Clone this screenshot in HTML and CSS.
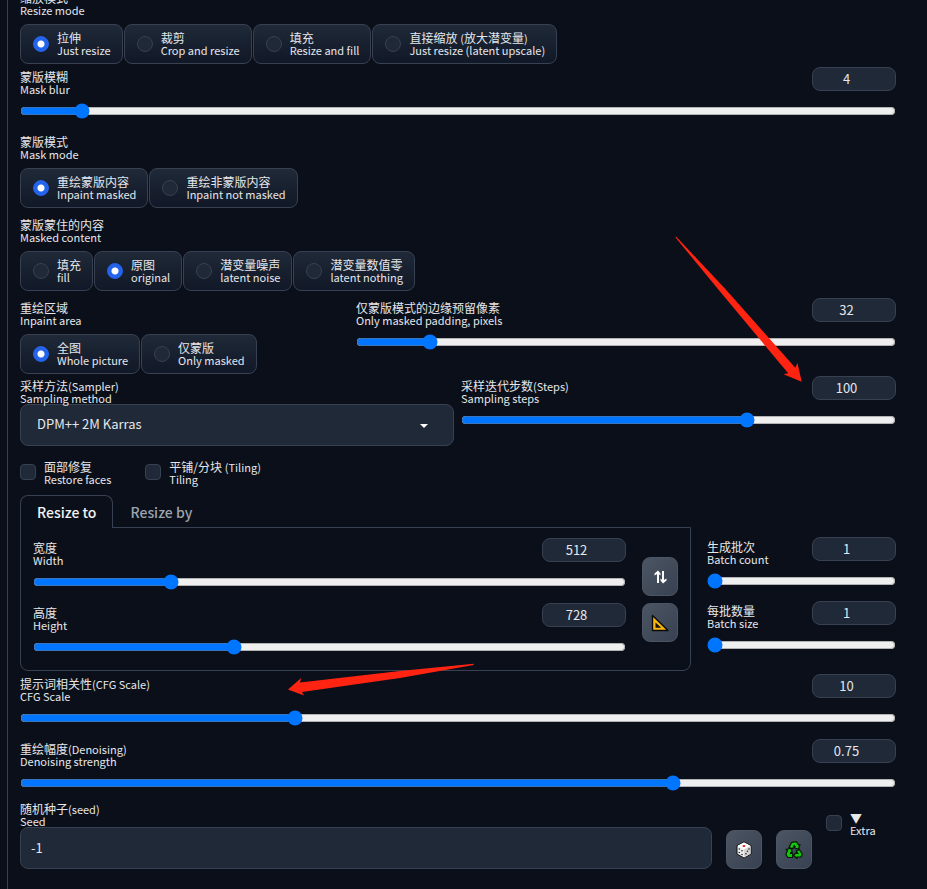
FILE: index.html
```html
<!DOCTYPE html>
<html lang="zh-CN">
<head>
<meta charset="utf-8">
<meta name="viewport" content="width=device-width, initial-scale=1">
<title>img2img</title>
<link rel="stylesheet" href="styles.css">
</head>
<body>
<main class="panel">
  <fieldset class="choice">
    <legend class="bi"><span>缩放模式</span><span>Resize mode</span></legend>
    <div class="options">
      <label class="option"><input type="radio" name="resize" checked><span class="bi"><span>拉伸</span><span>Just resize</span></span></label>
      <label class="option"><input type="radio" name="resize"><span class="bi"><span>裁剪</span><span>Crop and resize</span></span></label>
      <label class="option"><input type="radio" name="resize"><span class="bi"><span>填充</span><span>Resize and fill</span></span></label>
      <label class="option"><input type="radio" name="resize"><span class="bi"><span>直接缩放 <small>(</small>放大潜变量<small>)</small></span><span>Just resize (latent upscale)</span></span></label>
    </div>
  </fieldset>

  <div class="slider tight">
    <div class="slider-head">
      <label class="bi" for="blur"><span>蒙版模糊</span><span>Mask blur</span></label>
      <input class="num" type="number" value="4" aria-label="Mask blur value">
    </div>
    <input id="blur" type="range" min="0" max="64" value="4">
  </div>

  <fieldset class="choice">
    <legend class="bi"><span>蒙版模式</span><span>Mask mode</span></legend>
    <div class="options">
      <label class="option"><input type="radio" name="mask" checked><span class="bi"><span>重绘蒙版内容</span><span>Inpaint masked</span></span></label>
      <label class="option"><input type="radio" name="mask"><span class="bi"><span>重绘非蒙版内容</span><span>Inpaint not masked</span></span></label>
    </div>
  </fieldset>

  <fieldset class="choice">
    <legend class="bi"><span>蒙版蒙住的内容</span><span>Masked content</span></legend>
    <div class="options">
      <label class="option"><input type="radio" name="content"><span class="bi"><span>填充</span><span>fill</span></span></label>
      <label class="option"><input type="radio" name="content" checked><span class="bi"><span>原图</span><span>original</span></span></label>
      <label class="option"><input type="radio" name="content"><span class="bi"><span>潜变量噪声</span><span>latent noise</span></span></label>
      <label class="option"><input type="radio" name="content"><span class="bi"><span>潜变量数值零</span><span>latent nothing</span></span></label>
    </div>
  </fieldset>

  <div class="area-row">
    <fieldset class="choice">
      <legend class="bi"><span>重绘区域</span><span>Inpaint area</span></legend>
      <div class="options">
        <label class="option"><input type="radio" name="area" checked><span class="bi"><span>全图</span><span>Whole picture</span></span></label>
        <label class="option"><input type="radio" name="area"><span class="bi"><span>仅蒙版</span><span>Only masked</span></span></label>
      </div>
    </fieldset>
    <div class="slider">
      <div class="slider-head">
        <label class="bi" for="padding"><span>仅蒙版模式的边缘预留像素</span><span>Only masked padding, pixels</span></label>
        <input class="num" type="number" value="32" aria-label="Only masked padding value">
      </div>
      <input id="padding" type="range" min="0" max="256" value="32">
    </div>
  </div>

  <div class="sampler-row snug">
    <div class="field">
      <label class="bi" for="sampler"><span>采样方法<small>(Sampler)</small></span><span>Sampling method</span></label>
      <div class="select">
        <select id="sampler"><option>DPM++ 2M Karras</option></select>
        <svg class="caret" viewBox="0 0 8 4" aria-hidden="true"><path d="M0 0H8L4 4Z"/></svg>
      </div>
    </div>
    <div class="slider">
      <div class="slider-head">
        <label class="bi" for="steps"><span>采样迭代步数<small>(Steps)</small></span><span>Sampling steps</span></label>
        <input class="num" type="number" value="100" aria-label="Sampling steps value">
      </div>
      <input id="steps" type="range" min="1" max="150" value="100">
    </div>
  </div>

  <div class="checks">
    <label class="check"><input type="checkbox"><span class="bi"><span>面部修复</span><span>Restore faces</span></span></label>
    <label class="check"><input type="checkbox"><span class="bi"><span>平铺/分块 <small>(Tiling)</small></span><span>Tiling</span></span></label>
  </div>

  <div class="size-row">
    <section class="tabs">
      <div class="tab-bar" role="tablist">
        <button class="tab active" type="button" role="tab" aria-selected="true">Resize to</button>
        <button class="tab" type="button" role="tab" aria-selected="false">Resize by</button>
      </div>
      <div class="tab-body">
        <div class="stack">
          <div class="slider">
            <div class="slider-head">
              <label class="bi" for="width"><span>宽度</span><span>Width</span></label>
              <input class="num" type="number" value="512" aria-label="Width value">
            </div>
            <input id="width" type="range" min="64" max="2048" step="8" value="512">
          </div>
          <div class="slider">
            <div class="slider-head">
              <label class="bi" for="height"><span>高度</span><span>Height</span></label>
              <input class="num" type="number" value="728" aria-label="Height value">
            </div>
            <input id="height" type="range" min="64" max="2048" step="8" value="728">
          </div>
        </div>
        <div class="tools">
          <button class="tool" type="button" aria-label="Swap width and height">
            <svg viewBox="0 0 18 18" width="18" height="18"><path d="M7 15V5M12 3V13" fill="none" stroke="#fff" stroke-width="2"/><path d="M7 2.500 9.500 5.500V7.500L7 5.500 3.500 7.500V5.500ZM12 15.500 15.500 12.500V10.500L12 12.500 9.500 10.500V12.500Z" fill="#fff"/></svg>
          </button>
          <button class="tool" type="button" aria-label="Detect size">
            <svg viewBox="0 0 18 18" width="18" height="18"><path d="M1.500 1.500V16.500H17Z" fill="#fbb50c" stroke="#0b0b0b" stroke-width="1.400" stroke-linejoin="round"/><path d="M4.500 8.500 10.300 13.800H4.500Z" fill="#111"/></svg>
          </button>
        </div>
      </div>
    </section>
    <div class="batch stack">
      <div class="slider">
        <div class="slider-head">
          <label class="bi" for="count"><span>生成批次</span><span>Batch count</span></label>
          <input class="num" type="number" value="1" aria-label="Batch count value">
        </div>
        <input id="count" type="range" min="1" max="100" value="1">
      </div>
      <div class="slider">
        <div class="slider-head">
          <label class="bi" for="batch"><span>每批数量</span><span>Batch size</span></label>
          <input class="num" type="number" value="1" aria-label="Batch size value">
        </div>
        <input id="batch" type="range" min="1" max="8" value="1">
      </div>
    </div>
  </div>

  <div class="slider tight">
    <div class="slider-head">
      <label class="bi" for="cfg"><span>提示词相关性<small>(CFG Scale)</small></span><span>CFG Scale</span></label>
      <input class="num" type="number" value="10" aria-label="CFG Scale value">
    </div>
    <input id="cfg" type="range" min="1" max="30" step="0.5" value="10">
  </div>

  <div class="slider">
    <div class="slider-head">
      <label class="bi" for="denoise"><span>重绘幅度<small>(Denoising)</small></span><span>Denoising strength</span></label>
      <input class="num" type="number" step="0.01" value="0.75" aria-label="Denoising strength value">
    </div>
    <input id="denoise" type="range" min="0" max="1" step="0.01" value="0.75">
  </div>

  <div class="seed-row snug">
    <div class="field seed">
      <label class="bi" for="seed"><span>随机种子<small>(seed)</small></span><span>Seed</span></label>
      <input id="seed" class="text" type="number" value="-1">
    </div>
    <button class="tool" type="button" aria-label="Random seed">
      <svg viewBox="0 0 18 18" width="18" height="18"><path d="M9 1 16 4.500V13L9 17 2 13V4.500Z" fill="#eee" stroke="#111" stroke-linejoin="round"/><path d="M9 8.500 15.600 4.800V12.800L9 16.500Z" fill="#d4d4d4"/><path d="M9 1.600 15.200 4.700 9 8.300 2.800 4.700Z" fill="#fff"/><ellipse cx="9" cy="4.900" rx="1.500" ry="1" fill="#d22"/><g fill="#222"><circle cx="4.300" cy="8" r=".8"/><circle cx="7" cy="9.800" r=".8"/><circle cx="4.300" cy="11.500" r=".8"/><circle cx="7" cy="13.500" r=".8"/><circle cx="11" cy="12.800" r=".8"/><circle cx="14" cy="8" r=".8"/><circle cx="12.500" cy="10.300" r=".8"/></g></svg>
    </button>
    <button class="tool" type="button" aria-label="Reuse seed">
      <svg viewBox="0 0 18 18" width="18" height="18"><g stroke="#041604" stroke-width="1.200" stroke-linejoin="round" fill="#16c60c"><path d="M4 6.500 6.500 1.500 9 .8H11.500L13.500 4 15 3.500 13.500 8 9 7 10.300 6 9.200 4.500 7.500 8Z"/><path d="M14.200 8.200 17.200 13 16 16H12V17.500L8.500 14.300 12 11V12.500H13L11.200 10Z"/><path d="M1 8.500 6 7.200 7.200 12 5.700 11.500 5.500 12.500H7.700V16.500H3L.8 13.500 2.500 9.500Z"/></g></svg>
    </button>
    <label class="check extra"><input type="checkbox"><span class="bi"><span>▼</span><span>Extra</span></span></label>
  </div>
</main>

<svg class="arrows" viewBox="0 0 927 889" width="927" height="889" aria-hidden="true">
  <path d="M676 236.500 724 287.500 795.300 367.800 797.400 363 801.700 381.700 783.500 374.300 788.200 373.300 720 291.500 675.500 237.500Z"/>
  <path d="M473.700 663.800 400 671 300 682.500 301.200 678 288 689.500 304 695.500 302 692 400 678 473.700 665Z"/>
</svg>
</body>
</html>
```
FILE: styles.css
```css
* { box-sizing: border-box; }

html {
  height: 100%;
  overflow: hidden;
  background: #0b0f19;
}

body {
  margin: 0;
  padding-left: 7px;
  min-height: 100%;
  font: 400 12px/12px "Noto Sans CJK SC", sans-serif;
  color: #e5e7eb;
}

input, select, button {
  font: inherit;
  color: inherit;
  margin: 0;
}

.panel {
  display: flex;
  flex-direction: column;
  gap: 7px;
  margin-top: -12px;
  min-height: 920px;
  padding: 0 31px 0 12px;
  border-left: 1px solid #374151;
}

.tight { margin-top: -4px; }
.snug { margin-top: -5px; }

/* Two-line label: Chinese above English */
.bi {
  display: flex;
  flex-direction: column;
  position: relative;
  z-index: 1;
  padding: 0;
  white-space: nowrap;
}

.bi > span { display: block; height: 12px; }
.bi > span:last-child, .bi small { font-size: 11px; }

/* Radio groups */
.choice {
  margin: 0;
  padding: 0;
  border: 0;
  min-width: 0;
}

.choice legend { padding-top: 4px; }

.options {
  display: flex;
  flex-wrap: wrap;
  gap: 1px;
  padding-top: 8px;
}

.option {
  display: flex;
  align-items: center;
  gap: 8px;
  height: 40px;
  padding: 0 11px 0 12px;
  border: 1px solid #374151;
  border-radius: 8px;
  background: linear-gradient(#1f2937, #111827);
}

input[type="radio"], input[type="checkbox"] {
  appearance: none;
  flex: none;
  width: 16px;
  height: 16px;
  border: 1px solid #374151;
  border-radius: 4px;
  background: #1f2937;
}

input[type="radio"] { border-radius: 50%; }

input[type="radio"]:checked {
  border-color: #2563eb;
  background: radial-gradient(circle, #fff 0 2px, #fff 3px, #2563eb 4px);
}

/* Sliders */
.slider {
  display: flex;
  flex-direction: column;
  gap: 12px;
  padding-bottom: 6px;
  min-width: 0;
}

.slider-head {
  display: flex;
  justify-content: space-between;
  height: 24px;
}

.slider-head .bi { padding-top: 4px; }

.num {
  width: 84px;
  height: 24px;
  padding: 0 8px 1px;
  border: 1px solid #374151;
  border-radius: 8px;
  background: #1f2937;
  font-size: 13px;
  text-align: center;
}

input[type="range"] {
  display: block;
  width: 100%;
  height: 16px;
}

/* Rows */
.area-row {
  display: grid;
  grid-template-columns: 320fr 540fr;
  gap: 16px;
}

.sampler-row {
  display: grid;
  grid-template-columns: 434fr 435fr;
  gap: 7px;
}

.field { padding-top: 4px; }

.select { position: relative; }

.select select, .text {
  display: block;
  appearance: none;
  width: 100%;
  height: 42px;
  padding: 0 16px 2px;
  border: 1px solid #374151;
  border-radius: 8px;
  background: #1f2937;
  font-size: 13px;
}

.text { padding: 0 10px 2px; }

.caret {
  position: absolute;
  right: 26px;
  top: 20px;
  width: 8px;
  height: 4px;
  fill: #fff;
}

.checks {
  display: flex;
  gap: 34px;
  padding: 8px 0 3px;
}

.check {
  display: flex;
  align-items: center;
  gap: 8px;
}

.check input { margin-top: -2px; }

/* Size tabs and batch */
.size-row {
  display: grid;
  grid-template-columns: 671fr 189fr;
  gap: 16px;
}

.tab-bar { display: flex; }

.tab {
  height: 33px;
  padding: 0 16px;
  border: 1px solid transparent;
  border-bottom: 0;
  background: none;
  font-size: 14px;
  font-weight: 500;
  color: #9ca3af;
}

.tab.active {
  z-index: 1;
  border-color: #374151;
  border-radius: 8px 8px 0 0;
  background: #0b0f19;
  color: #f3f4f6;
}

.tab-body {
  display: flex;
  gap: 16px;
  margin-top: -1px;
  padding: 10px 12px 9px;
  border: 1px solid #374151;
  border-radius: 0 0 8px 8px;
}

.stack {
  display: flex;
  flex-direction: column;
  flex: 1;
  gap: 7px;
  min-width: 0;
}

.batch { padding-top: 42px; gap: 6px; }

.tools {
  display: flex;
  flex-direction: column;
  gap: 7px;
  padding-top: 19px;
}

.tool {
  display: grid;
  place-items: center;
  width: 36px;
  height: 39px;
  padding: 0;
  border: 1px solid #4b5563;
  border-radius: 8px;
  background: linear-gradient(to bottom right, #4b5563, #374151);
}

/* Seed */
.seed-row {
  display: flex;
  align-items: flex-end;
  gap: 14px;
}

.seed { flex: 1; }

.extra {
  align-self: flex-start;
  padding-top: 13px;
  width: 70px;
}

/* Annotation arrows */
.arrows {
  position: absolute;
  left: 0;
  top: 0;
  z-index: 2;
  fill: #ff2312;
  pointer-events: none;
}
```
